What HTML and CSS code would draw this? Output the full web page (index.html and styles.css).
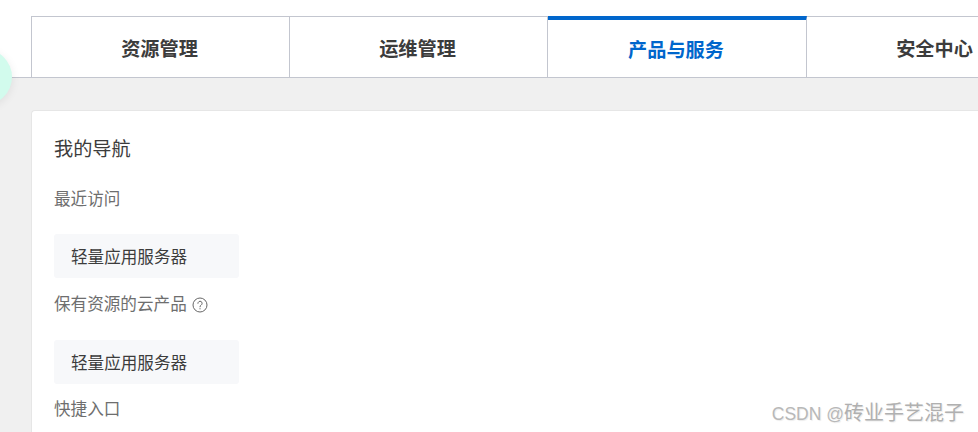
FILE: index.html
```html
<!DOCTYPE html>
<html lang="zh-CN">
<head>
  <meta charset="UTF-8" />
  <meta name="viewport" content="width=device-width, initial-scale=1" />
  <title>我的导航</title>
  <link rel="stylesheet" href="styles.css">
</head>
<body>
  <header class="topbar">
    <nav class="tabs">
      <a class="tab tab-wide">资源管理</a>
      <a class="tab">运维管理</a>
      <a class="tab tab-wide active">产品与服务</a>
      <a class="tab">安全中心</a>
    </nav>
  </header>

  <main class="content">
    <section class="card">
      <h2 class="card-title">我的导航</h2>

      <h3 class="group-title">最近访问</h3>
      <div class="product">轻量应用服务器</div>

      <h3 class="group-title group-help">
        保有资源的云产品
        <svg class="help-icon" width="16" height="16" viewBox="0 0 16 16" fill="none" stroke="#666" aria-hidden="true">
          <circle cx="8" cy="8" r="7" />
          <path d="M5.9 6.3a2.1 2.1 0 1 1 3.2 1.8c-.8.5-1.1.9-1.1 1.7" stroke-linecap="round" />
          <path d="M8 11.2v1.1" />
        </svg>
      </h3>
      <div class="product product-second">轻量应用服务器</div>

      <h3 class="group-title group-last">快捷入口</h3>
    </section>
  </main>

  <div class="float-ball"></div>
  <div class="watermark"><span class="watermark-latin">CSDN @</span>砖业手艺混子</div>
</body>
</html>
```

FILE: styles.css
```css
html, body {
  height: 100%;
}
body {
  margin: 0;
  overflow: hidden;
  background: #f0f0f0;
  color: #333;
  font-family: "Liberation Sans", "Noto Sans CJK SC", sans-serif;
}
.topbar {
  background: #fff;
  padding: 16px 0 0 31px;
  border-bottom: 1px solid #c3c6cf;
}
.tabs {
  display: flex;
  width: 947px;
  overflow: hidden;
}
.tab {
  box-sizing: border-box;
  width: 258px;
  height: 61px;
  flex: none;
  display: flex;
  align-items: center;
  justify-content: center;
  padding: 2px 2px 0 0;
  border: 1px solid #c3c6cf;
  border-bottom: none;
  border-left: none;
  font-size: 19.2px;
  font-weight: 700;
  color: #3c3c3c;
}
.tab-wide {
  width: 259px;
}
.tab:first-child {
  border-left: 1px solid #c3c6cf;
}
.tab.active {
  padding-top: 0;
  border-top: 4px solid #0066cc;
  color: #0066cc;
}
.content {
  padding: 32px 0 0 31px;
}
.card {
  box-sizing: border-box;
  width: 947px;
  height: 322px;
  background: #fff;
  border: 1px solid #e6e6e6;
  border-right: none;
  border-bottom: none;
  border-radius: 4px 0 0 0;
  padding: 26px 22px 0;
  overflow: hidden;
}
.card-title {
  margin: 0;
  font-size: 19.2px;
  font-weight: 400;
  line-height: 26px;
  color: #3c3c3c;
}
.group-title {
  margin: 0;
  padding-top: 25px;
  font-size: 16.6px;
  font-weight: 400;
  line-height: 24px;
  color: #6e6e6e;
}
.group-help {
  display: flex;
  align-items: center;
  gap: 5px;
  padding-top: 15px;
}
.group-last {
  padding-top: 14px;
}
.help-icon {
  flex: none;
  margin-top: -1px;
}
.product {
  width: 185px;
  height: 44px;
  box-sizing: border-box;
  margin-top: 22px;
  padding-left: 17px;
  background: #f7f8fa;
  border-radius: 3px;
  font-size: 16.6px;
  line-height: 48px;
  color: #3c3c3c;
}
.product-second {
  margin-top: 23px;
}
.float-ball {
  position: absolute;
  left: -44px;
  top: 49px;
  width: 56px;
  height: 56px;
  border-radius: 50%;
  background: #d2fbed;
  box-shadow: 0 2px 10px rgba(0, 0, 0, 0.08);
}
.watermark {
  position: absolute;
  right: 14px;
  top: 400px;
  font-size: 20px;
  line-height: 26px;
  color: #b0b0b0;
  text-shadow: 1px 1px 1px rgba(0, 0, 0, 0.08);
  white-space: nowrap;
}
.watermark-latin {
  font-size: 17.5px;
  color: #b8b8b8;
}
```
